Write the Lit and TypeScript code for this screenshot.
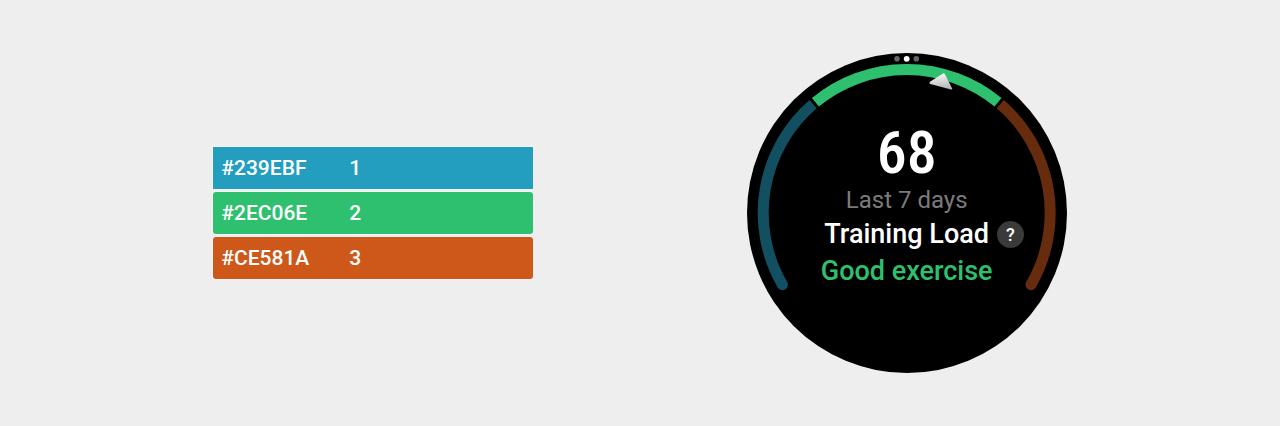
import { LitElement, html, css } from "lit";
import { customElement, property } from "lit/decorators.js";

interface Swatch {
  hex: string;
  label: string;
}

@customElement("color-legend")
class ColorLegend extends LitElement {
  @property({ attribute: false }) swatches: Swatch[] = [];

  static styles = css`
    :host {
      display: block;
      width: 320px;
    }
    .legend {
      display: block;
      width: 100%;
    }
    .rows {
      display: flex;
      flex-direction: column;
      gap: 3px;
    }
    .row {
      display: grid;
      grid-template-columns: 2fr 3fr;
      align-items: center;
      height: 42px;
      border-radius: 3px;
      box-shadow: 0 0 0 1px #f4f4f4;
      color: #fff;
      font-size: 21px;
      line-height: 26px;
    }
    .row:first-child {
      border-radius: 0;
    }
    .cell {
      padding: 0 8px;
      text-align: left;
      font-weight: 500;
    }
  `;

  render() {
    return html`<table class="legend">
      <tbody class="rows">
        ${this.swatches.map(
          (s) => html`<tr class="row" style="background:${s.hex}">
            <th class="cell" scope="row">${s.hex}</th>
            <td class="cell">${s.label}</td>
          </tr>`
        )}
      </tbody>
    </table>`;
  }
}

@customElement("watch-face")
class WatchFace extends LitElement {
  static styles = css`
    :host {
      display: block;
      position: relative;
      width: 320px;
      height: 320px;
      box-sizing: border-box;
      padding-top: 67px;
      border-radius: 50%;
      background: #000;
    }
    .dial {
      position: absolute;
      inset: 0;
      width: 100%;
      height: 100%;
    }
    .readout {
      position: relative;
      display: flex;
      flex-direction: column;
      align-items: stretch;
      text-align: center;
    }
    .score {
      font-family: "Roboto Condensed", "Liberation Sans Narrow", "Open Sans Condensed", Roboto, sans-serif;
      font-size: 60px;
      line-height: 66px;
      font-weight: 500;
      color: #fff;
    }
    .period {
      font-size: 24px;
      line-height: 28px;
      color: #7b7b7b;
    }
    .title {
      display: grid;
      grid-template-columns: 1fr auto 1fr;
      align-items: center;
      gap: 8px;
      font-size: 27px;
      line-height: 40px;
      font-weight: 500;
      color: #fff;
    }
    .help {
      grid-column: 3;
      width: 27px;
      height: 27px;
      padding: 0;
      border: 0;
      border-radius: 50%;
      background: #3a3a3a;
      color: #fff;
      font: 500 18px/27px Roboto, sans-serif;
    }
    .name {
      grid-column: 2;
    }
    .verdict {
      font-size: 27px;
      line-height: 34px;
      font-weight: 500;
      color: #2ec06e;
    }
  `;

  render() {
    return html`
      <svg class="dial" viewBox="0 0 320 320" aria-hidden="true">
        <defs>
          <linearGradient id="needle" x1="0.4" y1="0" x2="0.6" y2="1">
            <stop offset="0.1" stop-color="#f2f2f2" />
            <stop offset="1" stop-color="#b4b4b4" />
          </linearGradient>
        </defs>
        <g fill="none" stroke-width="11">
          <path d="M66.1 51.2A143.5 143.5 0 0 0 35.4 231.7" stroke="#124f60" />
          <path d="M68.4 49.3A143.5 143.5 0 0 1 251 49.3" stroke="#2ec06e" />
          <path d="M253.3 51.2A143.5 143.5 0 0 1 284 231.7" stroke="#672c0d" />
        </g>
        <circle cx="35.4" cy="231.7" r="5.5" fill="#124f60" />
        <circle cx="284" cy="231.7" r="5.5" fill="#672c0d" />
        <path
          d="M183 28.8L195.9 20.6Q197.1 19.9 197.8 21.1L205 35.2Q205.6 36.8 204 36.6L183.3 31Q181.5 30.2 183 28.8Z"
          fill="url(#needle)"
        />
        <circle cx="150" cy="5.8" r="2.8" fill="#666" />
        <circle cx="159.7" cy="5.8" r="2.9" fill="#fff" />
        <circle cx="169.3" cy="5.8" r="2.8" fill="#666" />
      </svg>
      <div class="readout">
        <div class="score">68</div>
        <div class="period">Last 7 days</div>
        <div class="title">
          <span class="name">Training Load</span>
          <button class="help" type="button">?</button>
        </div>
        <div class="verdict">Good exercise</div>
      </div>
    `;
  }
}

@customElement("app-root")
class AppRoot extends LitElement {
  static styles = css`
    :host {
      display: block;
      background: #eee;
      font-family: Roboto, sans-serif;
    }
    .page {
      display: flex;
      flex-wrap: wrap;
      justify-content: space-evenly;
      align-items: center;
      gap: 32px 0;
      padding: 53px 0;
    }
  `;

  private swatches: Swatch[] = [
    { hex: "#239EBF", label: "1" },
    { hex: "#2EC06E", label: "2" },
    { hex: "#CE581A", label: "3" },
  ];

  render() {
    return html`<main class="page">
      <color-legend .swatches=${this.swatches}></color-legend>
      <watch-face></watch-face>
    </main>`;
  }
}
